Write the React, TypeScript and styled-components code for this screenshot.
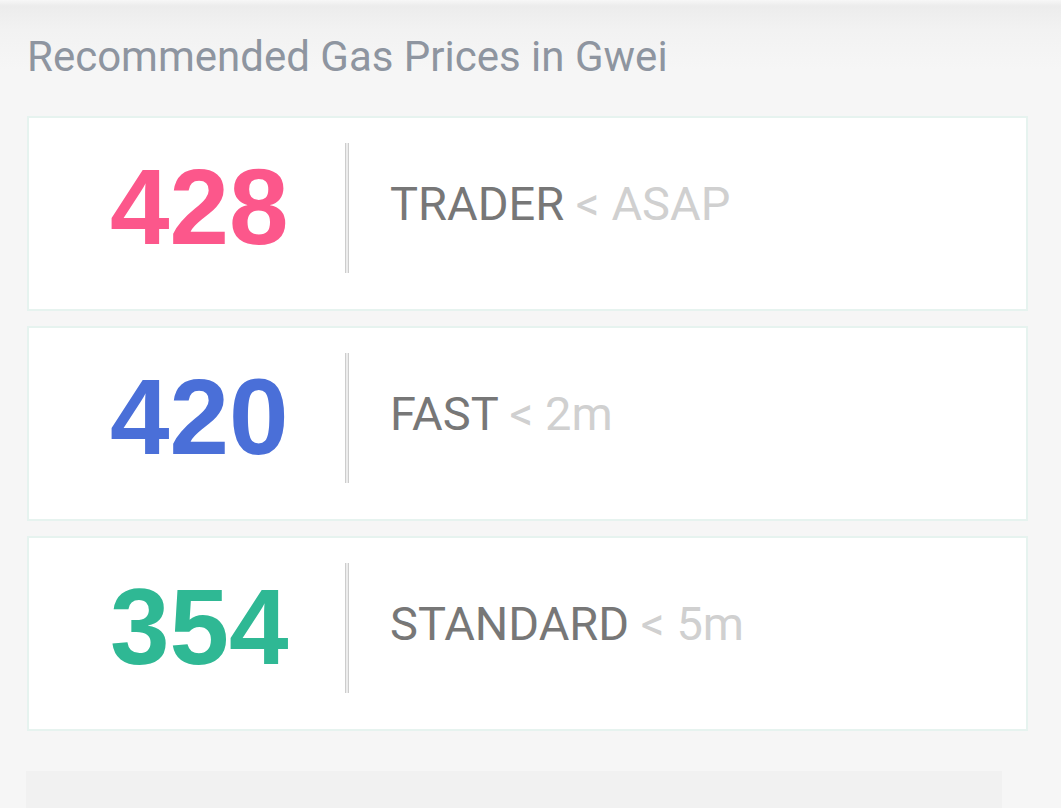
import React from "react";
import styled, { createGlobalStyle } from "styled-components";

const Global = createGlobalStyle`
  html, body { margin: 0; padding: 0; background: #f6f6f6; }
  body { font-family: Roboto, "Noto Sans", sans-serif; overflow: hidden; }
`;

const Page = styled.div`
  min-height: 808px;
  background: linear-gradient(to bottom, #f7f7f7 0px, #ececec 6px, #f2f2f2 30px, #f6f6f6 70px, #f6f6f6 100%);
  padding: 36px 33px 0 27px;
  box-sizing: border-box;
`;

const Title = styled.h2`
  margin: 0 0 38px 0;
  font-family: Roboto, sans-serif;
  font-weight: 400;
  font-size: 42px;
  line-height: 42px;
  color: #8e95a0;
`;

const List = styled.div`
  display: flex;
  flex-direction: column;
  gap: 15px;
`;

const Card = styled.div`
  height: 195px;
  box-sizing: border-box;
  background: #fff;
  border: 2px solid #e6f3ef;
  display: flex;
  align-items: center;
  padding-bottom: 12px;
`;

const Price = styled.div<{ $color: string }>`
  font-family: "Liberation Sans", Arial, sans-serif;
  font-weight: 700;
  font-size: 107px;
  line-height: 1;
  color: ${(p) => p.$color};
  margin-left: 81px;
  width: 178px;
  margin-right: 57px;
`;

const Divider = styled.div`
  width: 2px;
  height: 130px;
  background: #ececec;
  border-left: 1px solid #cdcdcd;
  border-right: 1px solid #cdcdcd;
  box-sizing: content-box;
`;

const Label = styled.div`
  margin-left: 41px;
  margin-bottom: 8px;
  font-family: Roboto, sans-serif;
  font-size: 47px;
  line-height: 1;
  color: #777777;
  white-space: nowrap;
`;

const Sub = styled.span`
  color: #d0d0d0;
`;

const Footer = styled.div`
  margin-top: 40px;
  margin-right: 26px;
  margin-left: -1px;
  height: 60px;
  background: #f1f1f1;
`;

const rows = [
  { price: 428, color: "#fc578b", label: "TRADER", sub: "< ASAP" },
  { price: 420, color: "#4a6fd8", label: "FAST", sub: "< 2m" },
  { price: 354, color: "#2fb894", label: "STANDARD", sub: "< 5m" },
];

export default function App() {
  return (
    <>
      <Global />
      <Page>
        <Title>Recommended Gas Prices in Gwei</Title>
        <List>
          {rows.map((r) => (
            <Card key={r.label}>
              <Price $color={r.color}>{r.price}</Price>
              <Divider />
              <Label>
                {r.label} <Sub>{r.sub}</Sub>
              </Label>
            </Card>
          ))}
        </List>
        <Footer />
      </Page>
    </>
  );
}
